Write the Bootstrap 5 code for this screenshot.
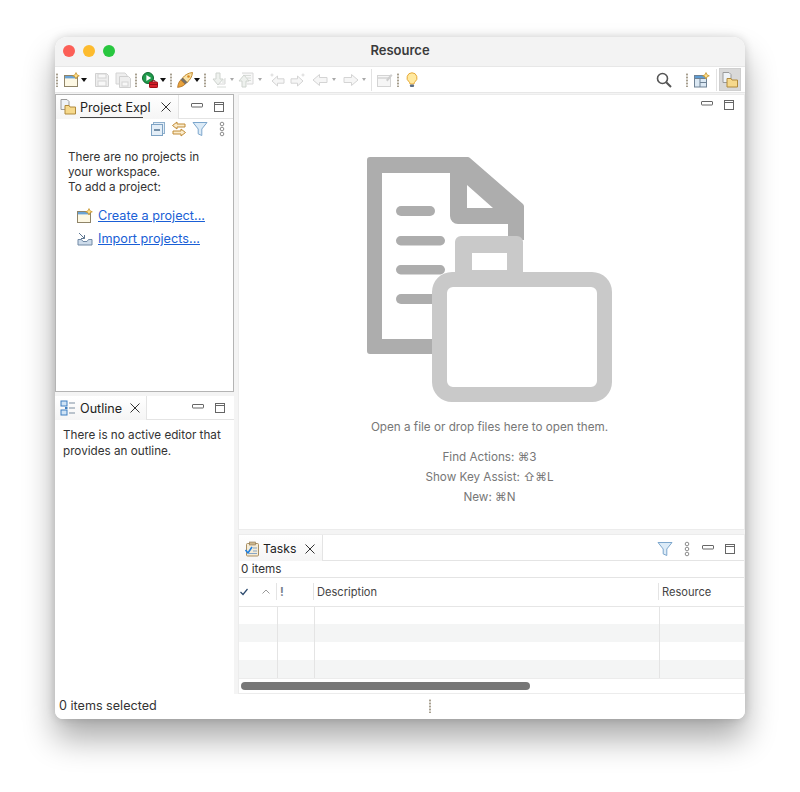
<!DOCTYPE html>
<html lang="en">
<head>
  <meta charset="UTF-8">
  <title>Resource</title>
  <link href="https://cdn.jsdelivr.net/npm/bootstrap@5.3.0/dist/css/bootstrap.min.css" rel="stylesheet">
  <script src="https://cdn.jsdelivr.net/npm/bootstrap@5.3.0/dist/js/bootstrap.bundle.min.js"></script>
  <style>
    html, body { height: 100%; background: #fff; overflow: hidden; }
    body { font-family: Inter, "Liberation Sans", sans-serif; font-size: 11.7px; color: #333; line-height: 16px; }
    .stage { padding: 37px 55px 0; }
    .ide-window { height: 682px; background: #fff; border-radius: 12px 12px 8px 8px; box-shadow: 0 20px 32px rgba(0,0,0,.33), 0 0 10px rgba(0,0,0,.16); overflow: hidden; }
    .title-bar { height: 29px; background: #f3f3f3; padding: 0 8px 2px; flex: none; }
    .title-text { font-weight: 600; font-size: 13px; color: #3a3a3a; left: 0; right: 0; text-align: center; margin-top: -2px; }
    .traffic { width: 12px; height: 12px; border-radius: 50%; }
    .tl-red { background: #fc5f57; }
    .tl-yellow { background: #fdbb2e; }
    .tl-green { background: #28c73f; }
    .tool-bar { height: 27px; flex: none; padding: 0 4px 0 1px; border-top: 1px solid #e7e7e7; border-bottom: 1px solid #e7e7e7; }
    .grip { width: 2px; height: 14px; flex: none; background: radial-gradient(circle, #a79f8f 0 1px, transparent 1.2px) 0 0 / 2px 3px repeat-y; }
    .tool-sep { width: 1px; height: 22px; background: #e2e2e2; flex: none; }
    .drop { width: 0; height: 0; flex: none; border: 3px solid transparent; border-top: 4px solid #111; border-bottom: 0; }
    .drop-off { border-width: 3px 2.5px 0; border-top-color: #a9a9a9; }
    .sp1 { margin-left: 1px; } .sp2 { margin-left: 2px; } .sp3 { margin-left: 3px; } .sp4 { margin-left: 4px; }
    .sp5 { margin-left: 5px; } .sp6 { margin-left: 6px; } .sp7 { margin-left: 7px; }
    .sp-search { margin-left: 14px; }
    .sp-menu { margin-left: 11px; }
    .persp-btn { width: 22px; height: 23px; background: #d9d9d9; border: 1px solid #cfcfcf; flex: none; margin-left: 2px; }
    .work-area { min-height: 0; background: #f4f4f4; }
    .left-col { width: 179px; flex: none; }
    .right-col { min-width: 0; margin-left: 4px; }
    .sash-h { height: 4px; flex: none; }
    .pane { background: #fff; min-height: 0; }
    .pane-active { border: 1px solid #b4b4b4; height: 298px; margin-top: 1px; flex: none; }
    .pane-plain { border: 1px solid #ececec; }
    .tab-row { height: 24px; flex: none; }
    .tab-item { height: 24px; padding-left: 4px; flex: none; background: linear-gradient(#fff, #f5f5f5); color: #222; }
    .tab-line { border-bottom: 1px solid #e4e4e4; }
    .tab-right { border-right: 1px solid #e4e4e4; }
    .tab-label { font-size: 12.2px; }
    .tab-wide { font-size: 12.6px; }
    .tab-under { height: 20px; line-height: 19px; margin-top: 1px; white-space: nowrap; width: 71px; background: linear-gradient(#444, #444) 0 100% / 63px 1px no-repeat; }
    .project-tab { width: 123px; }
    .outline-tab { width: 92px; padding-left: 5px; }
    .outline-label { margin-top: 1px; }
    .tasks-tab { width: 84px; padding-left: 5px; padding-top: 2px; height: 26px; }
    .tasks-row { height: 26px; }
    .tasks-right { padding-top: 2px; }
    .ctl-group { gap: 10px; padding-right: 8px; }
    .menu-shift { margin-right: 2px; }
    .close-project { margin-right: 6px; }
    .close-outline { margin-right: 5px; }
    .close-tasks { margin-right: 6px; }
    .view-bar { height: 20px; padding-right: 8px; flex: none; }
    .project-body { padding: 11px 12px 0; line-height: 15px; }
    .link-first { margin: 13px 0 0 9px; }
    .link-next { margin: 7px 0 0 9px; }
    .ide-link { color: #1a5fd6; font-size: 12.7px; line-height: 16px; margin-left: 1px; }
    .outline-body { padding: 7px 8px; }
    .editor-pane { height: 436px; margin-top: 1px; flex: none; }
    .min-max { top: 4px; right: 9px; gap: 10px; }
    .hero { padding-top: 62px; color: #777; margin-left: -4px; }
    .hero-open { margin-top: 16px; }
    .hero-keys { margin-top: 12px; line-height: 20px; }
    .tasks-pane { min-height: 0; }
    .items-row { height: 17px; flex: none; padding-left: 2px; border-bottom: 1px solid #e4e4e4; }
    .table-wrap { overflow: hidden; height: 100px; flex: none; }
    .task-table { table-layout: fixed; width: 505px; }
    .task-table th { font-weight: 400; font-size: 11.1px; color: #444; height: 28px; padding: 0 0 0 3px; border-bottom: 1px solid #e6e6e6; vertical-align: middle; }
    .task-table th.col-check { padding-left: 1px; }
    .task-table td { height: 18px; padding: 0; border: 0; border-right: 1px solid #e4e4e4; }
    .task-table td:last-child { border-right: 0; }
    .task-table tr:nth-child(even) td { background: #f4f5f5; }
    .col-check { width: 38px; }
    .col-prio { width: 37px; }
    .col-desc { width: 345px; }
    .head-rule { border-right: 1px solid #e4e4e4; height: 17px; line-height: 19px; }
    .prio-mark { color: #75808c; font-weight: 700; }
    .sort-caret { margin-left: 14px; }
    .scroll-track { height: 15px; flex: none; padding: 3px 0 0 2px; border-top: 1px solid #ececec; }
    .scroll-thumb { width: 289px; height: 8px; border-radius: 4px; background: #777; }
    .status-row { height: 25px; flex: none; padding: 0 0 2px 4px; background: #fff; color: #333; font-size: 12.6px; }
    .status-grip { margin-left: 272px; }
  </style>
</head>
<body>
  <svg class="d-none">
    <symbol id="i-new" viewBox="0 0 16 16">
      <rect x=".5" y="3.5" width="13" height="11" fill="#fdf8e4" stroke="#8f8468"/>
      <rect x="1" y="4" width="12" height="2.4" fill="#6aa3d5"/>
      <path d="M12 .6l1 2.2 2.3 1-2.3 1-1 2.2-1-2.2-2.3-1 2.3-1z" fill="#ffe08a" stroke="#c8962e" stroke-width=".8"/>
    </symbol>
    <symbol id="i-filter" viewBox="0 0 16 16">
      <path d="M1 1.500h14L9.800 8v6.500l-3.600-1.600V8z" fill="#dcebf7" stroke="#7ca6cc"/>
    </symbol>
    <symbol id="i-menu" viewBox="0 0 6 16">
      <circle cx="3" cy="3" r="1.800" fill="none" stroke="#8c8c8c"/>
      <circle cx="3" cy="8" r="1.800" fill="none" stroke="#8c8c8c"/>
      <circle cx="3" cy="13" r="1.800" fill="none" stroke="#8c8c8c"/>
    </symbol>
    <symbol id="i-min" viewBox="0 0 12 12">
      <rect x=".5" y="2.500" width="11" height="3.500" rx=".5" fill="#fff" stroke="#666"/>
    </symbol>
    <symbol id="i-max" viewBox="0 0 12 12">
      <rect x="1.500" y="1.500" width="9" height="9" fill="#fff" stroke="#666"/>
      <path d="M1.500 3.500h9" stroke="#666"/>
    </symbol>
    <symbol id="i-close" viewBox="0 0 12 12">
      <path d="M1.500 1.500l9 9M10.500 1.500l-9 9" stroke="#333" fill="none"/>
    </symbol>
    <symbol id="i-project" viewBox="0 0 16 16">
      <path d="M1 .5h6l2 2v8H1z" fill="#eef2f6" stroke="#9a9a9a"/>
      <path d="M5 6.500h4l1 1.500h5.500v7H5z" fill="#f6d98c" stroke="#b08a3c"/>
    </symbol>
    <symbol id="i-save" viewBox="0 0 16 16">
      <path d="M1.500 1.500h11l2 2v11h-13z" fill="#eee" stroke="#d0d0d0"/>
      <rect x="4" y="2" width="8" height="4" fill="#f8f8f8" stroke="#d4d4d4"/>
      <rect x="4" y="9" width="8" height="5" fill="#f8f8f8" stroke="#d4d4d4"/>
    </symbol>
    <symbol id="i-back" viewBox="0 0 16 16">
      <path d="M7.500 2.500L1 8l6.500 5.500V10.500H15v-5H7.500z" fill="#f6f6f6" stroke="#d4d4d4" stroke-linejoin="round"/>
    </symbol>
    <symbol id="i-fwd" viewBox="0 0 16 16">
      <path d="M8.500 2.500L15 8l-6.500 5.500V10.500H1v-5h7.500z" fill="#f6f6f6" stroke="#d4d4d4" stroke-linejoin="round"/>
    </symbol>
  </svg>

  <div class="stage">
    <div class="ide-window d-flex flex-column">
      <div class="title-bar d-flex align-items-center gap-2 position-relative">
        <span class="traffic tl-red"></span>
        <span class="traffic tl-yellow"></span>
        <span class="traffic tl-green"></span>
        <span class="title-text position-absolute">Resource</span>
      </div>

      <div class="tool-bar d-flex align-items-center">
        <span class="grip"></span>
        <svg class="sp6" width="16" height="16"><use href="#i-new"/></svg>
        <span class="drop sp1"></span>
        <svg class="sp7" width="16" height="16"><use href="#i-save"/></svg>
        <svg class="sp5" width="16" height="16" viewBox="0 0 16 16">
          <path d="M1 1h9l2 2v9H1z" fill="#eee" stroke="#d4d4d4"/>
          <path d="M4.500 4.500h9l2 2v9h-11z" fill="#eee" stroke="#d0d0d0"/>
          <rect x="7" y="10" width="6" height="4" fill="#f8f8f8" stroke="#d4d4d4"/>
        </svg>
        <span class="grip sp4"></span>
        <svg class="sp5" width="16" height="16" viewBox="0 0 16 16">
          <circle cx="6" cy="6" r="5.500" fill="#1f9a4b" stroke="#0f6a30"/>
          <path d="M4.400 3v6l4.800-3z" fill="#fff"/>
          <rect x="7.500" y="10" width="8" height="5.500" rx=".6" fill="#d9202c" stroke="#a01018"/>
          <path d="M10 10V8.600h3V10M7.500 12.400h8" stroke="#7c0d14" fill="none" stroke-width=".8"/>
        </svg>
        <span class="drop sp2"></span>
        <span class="grip sp4"></span>
        <svg class="sp5" width="16" height="16" viewBox="0 0 16 16">
          <path d="M15.500.5C11 1 8 3 5.500 6l4.500 4.500c3-2.500 5-5.500 5.500-10z" fill="#f8e2a8" stroke="#c48a2c"/>
          <path d="M5.500 6L3.800 8l4.200 4.200 2-1.700z" fill="#77726a" stroke="#5a554d" stroke-width=".6"/>
          <path d="M3.800 8C2 9.500 1 12 .6 15.400 4 15 6.500 14 8 12.200z" fill="#e8a23c" stroke="#a96a1e" stroke-width=".7"/>
          <circle cx="11.500" cy="4.500" r="1.300" fill="#d98a20"/>
        </svg>
        <span class="drop sp1"></span>
        <span class="grip sp4"></span>
        <svg class="sp5" width="16" height="16" viewBox="0 0 16 16">
          <path d="M5 1h4v6h3l-5 6-5-6h3z" fill="#eef1ee" stroke="#cfd4cf"/>
          <path d="M8 12h6V6" fill="none" stroke="#d8d8d8"/>
          <path d="M6 15h9M11 8h3M11 10h3" stroke="#d8dcd8"/>
        </svg>
        <span class="drop drop-off sp3"></span>
        <svg class="sp4" width="16" height="16" viewBox="0 0 16 16">
          <path d="M4 1h11v11H9" fill="#f7f7f7" stroke="#d8d8d8"/>
          <path d="M7 3.500h6M9 6h4M10 8.500h3" stroke="#d8dcd8"/>
          <path d="M6 3l5 6H8v6H4V9H1z" fill="#eef1ee" stroke="#cfd4cf"/>
        </svg>
        <span class="drop drop-off sp4"></span>
        <svg class="sp7" width="16" height="16" viewBox="0 0 16 16">
          <path d="M8.500 4L3 9l5.500 5v-2.800h6.500V6.800H8.500z" fill="#f6f6f6" stroke="#d4d4d4" stroke-linejoin="round"/>
          <path d="M3 .8l.7 1.700 1.800.5-1.800.6L3 5.300l-.7-1.700L.5 3l1.800-.5z" fill="#dcdcdc"/>
        </svg>
        <svg class="sp5" width="16" height="16" viewBox="0 0 16 16">
          <path d="M7.500 4L13 9l-5.500 5v-2.800H1V6.800h6.500z" fill="#f6f6f6" stroke="#d4d4d4" stroke-linejoin="round"/>
          <path d="M13 .8l.7 1.700 1.800.5-1.800.6-.7 1.700-.7-1.700-1.800-.6 1.800-.5z" fill="#dcdcdc"/>
        </svg>
        <svg class="sp6" width="16" height="16"><use href="#i-back"/></svg>
        <span class="drop drop-off sp4"></span>
        <svg class="sp7" width="16" height="16"><use href="#i-fwd"/></svg>
        <span class="drop drop-off sp3"></span>
        <span class="tool-sep sp5"></span>
        <svg class="sp5" width="16" height="16" viewBox="0 0 16 16">
          <rect x=".5" y="3.500" width="13" height="11" fill="#f6f6f6" stroke="#d4d4d4"/>
          <path d="M1 6h12" stroke="#ddd" stroke-width="2"/>
          <path d="M9 8l5-6 1.500 1.500-5 6z" fill="#cfcfcf"/>
        </svg>
        <span class="grip sp4"></span>
        <svg class="sp5" width="16" height="16" viewBox="0 0 16 16">
          <path d="M8 .8a5 5 0 0 0-3 9c.7.6 1 1.300 1 2.200h4c0-.9.3-1.600 1-2.200a5 5 0 0 0-3-9z" fill="#ffe9a0" stroke="#e6a93a"/>
          <rect x="6" y="12.500" width="4" height="2.500" rx=".8" fill="#5d6f86"/>
        </svg>
        <svg class="ms-auto" width="16" height="16" viewBox="0 0 16 16">
          <circle cx="6.500" cy="6.500" r="5" fill="none" stroke="#555" stroke-width="1.600"/>
          <path d="M10.200 10.200L15 15" stroke="#555" stroke-width="2"/>
        </svg>
        <span class="grip sp-search"></span>
        <svg class="sp6" width="16" height="16" viewBox="0 0 16 16">
          <rect x=".5" y="3.500" width="12" height="11.500" fill="#dbe8f3" stroke="#6f8295"/>
          <path d="M1 6.500h11M6 4v11M6 10.500h6" stroke="#6f8295" fill="none"/>
          <rect x="1" y="4" width="11" height="2" fill="#5d9bd2"/>
          <path d="M12 .6l1 2.200 2.300 1-2.300 1-1 2.200-1-2.200-2.300-1 2.300-1z" fill="#ffe08a" stroke="#c8962e" stroke-width=".8"/>
        </svg>
        <span class="tool-sep sp6"></span>
        <span class="persp-btn d-flex align-items-center justify-content-center">
          <svg width="16" height="16"><use href="#i-project"/></svg>
        </span>
      </div>

      <div class="work-area d-flex flex-grow-1">
        <div class="left-col d-flex flex-column">
          <section class="pane pane-active d-flex flex-column">
            <div class="tab-row d-flex">
              <div class="tab-item project-tab tab-right d-flex align-items-center">
                <svg width="16" height="16"><use href="#i-project"/></svg>
                <span class="tab-wide tab-under ms-1">Project Expl</span>
                <svg class="ms-auto close-project" width="12" height="12"><use href="#i-close"/></svg>
              </div>
              <div class="tab-line ctl-group flex-grow-1 d-flex align-items-center justify-content-end">
                <svg width="12" height="12"><use href="#i-min"/></svg>
                <svg width="12" height="12"><use href="#i-max"/></svg>
              </div>
            </div>
            <div class="view-bar d-flex align-items-center justify-content-end">
              <svg width="16" height="16" viewBox="0 0 16 16">
                <rect x="3.500" y="1.500" width="11" height="11" fill="#e4eef7" stroke="#8fb0cd"/>
                <rect x="1.500" y="3.500" width="11" height="11" fill="#e4eef7" stroke="#7ea3c4"/>
                <path d="M4 9h6" stroke="#4f6f8c" stroke-width="1.400"/>
              </svg>
              <svg class="sp5" width="16" height="16" viewBox="0 0 16 16">
                <path d="M6 1L1.500 4.500 6 8V6h8V3H6zM10 8l4.500 3.500L10 15v-2H2v-3h8z" fill="#fbeccb" stroke="#c08b36"/>
              </svg>
              <svg class="sp5" width="16" height="16"><use href="#i-filter"/></svg>
              <svg class="sp-menu" width="6" height="16"><use href="#i-menu"/></svg>
            </div>
            <div class="project-body">
              <div>There are no projects in<br>your workspace.<br>To add a project:</div>
              <div class="link-first d-flex align-items-center gap-1">
                <svg width="16" height="16"><use href="#i-new"/></svg>
                <a class="ide-link" href="#">Create a project...</a>
              </div>
              <div class="link-next d-flex align-items-center gap-1">
                <svg width="16" height="16" viewBox="0 0 16 16">
                  <path d="M1 8.500h3.500l1.500 2h4l1.500-2H15V14H1z" fill="#cddbea" stroke="#7089a5"/>
                  <path d="M2 2l5.500 5.500M7.500 4v3.500H4" stroke="#5d7691" fill="none"/>
                </svg>
                <a class="ide-link" href="#">Import projects...</a>
              </div>
            </div>
          </section>
          <div class="sash-h"></div>
          <section class="pane flex-grow-1 d-flex flex-column">
            <div class="tab-row d-flex">
              <div class="tab-item outline-tab tab-right d-flex align-items-center">
                <svg width="16" height="16" viewBox="0 0 16 16">
                  <rect x="1" y="1" width="6" height="5" fill="#cfe3f5" stroke="#3f7fc0"/>
                  <rect x="1" y="10" width="6" height="5" fill="#cfe3f5" stroke="#3f7fc0"/>
                  <path d="M9 3h6M9 8h6M9 13h6" stroke="#7d8ea0"/>
                  <rect x="5" y="7" width="2.500" height="2" fill="#3f7fc0"/>
                </svg>
                <span class="tab-wide outline-label ms-1">Outline</span>
                <svg class="ms-auto close-outline" width="12" height="12"><use href="#i-close"/></svg>
              </div>
              <div class="tab-line ctl-group flex-grow-1 d-flex align-items-center justify-content-end">
                <svg width="12" height="12"><use href="#i-min"/></svg>
                <svg width="12" height="12"><use href="#i-max"/></svg>
              </div>
            </div>
            <div class="outline-body">There is no active editor that provides an outline.</div>
          </section>
        </div>

        <div class="right-col flex-grow-1 d-flex flex-column">
          <section class="pane pane-plain editor-pane position-relative">
            <div class="min-max position-absolute d-flex">
              <svg width="12" height="12"><use href="#i-min"/></svg>
              <svg width="12" height="12"><use href="#i-max"/></svg>
            </div>
            <div class="hero d-flex flex-column align-items-center text-center">
              <svg width="245" height="246" viewBox="367 157 245 246">
                <path fill-rule="evenodd" fill="#adadad" d="M370 157h97a4 4 0 0 1 3 1l53 46a4 4 0 0 1 1 3v33h-16v-16h-50a8 8 0 0 1-8-8v-43h-68v166h60v15h-72a3 3 0 0 1-3-3V160a3 3 0 0 1 3-3zM467 185v23h26z"/>
                <rect x="396" y="206" width="39" height="10" rx="5" fill="#adadad"/>
                <rect x="396" y="236" width="49" height="9.500" rx="4.700" fill="#adadad"/>
                <rect x="396" y="265" width="49" height="9.500" rx="4.700" fill="#adadad"/>
                <rect x="396" y="294" width="45" height="10" rx="5" fill="#adadad"/>
                <path fill-rule="evenodd" fill="#c9c9c9" d="M461 236h56a6 6 0 0 1 6 6v30h69a20 20 0 0 1 20 20v90a20 20 0 0 1-20 20H452a20 20 0 0 1-20-20v-90a20 20 0 0 1 20-20h3v-30a6 6 0 0 1 6-6zM472 253v17h35v-17zM453 287a6 6 0 0 0-6 6v88a6 6 0 0 0 6 6h138a6 6 0 0 0 6-6v-88a6 6 0 0 0-6-6z"/>
              </svg>
              <div class="hero-open">Open a file or drop files here to open them.</div>
              <div class="hero-keys">Find Actions: ⌘3<br>Show Key Assist: ⇧⌘L<br>New: ⌘N</div>
            </div>
          </section>
          <div class="sash-h"></div>
          <section class="pane pane-plain tasks-pane flex-grow-1 d-flex flex-column">
            <div class="tab-row tasks-row d-flex">
              <div class="tab-item tasks-tab tab-right d-flex align-items-center">
                <svg width="16" height="16" viewBox="0 0 16 16">
                  <rect x="2.500" y="2.500" width="12" height="12.500" rx="1" fill="#f5ecd7" stroke="#a98f63"/>
                  <rect x="5.500" y="1" width="6" height="3" fill="#cbb68d" stroke="#8e7750" stroke-width=".6"/>
                  <path d="M9 7h4M9 10h4M5 12.500h8" stroke="#87a6c6"/>
                  <path d="M1.500 9l2.500 3 4-6" fill="none" stroke="#1e7fe0" stroke-width="1.600"/>
                </svg>
                <span class="tab-label sp3">Tasks</span>
                <svg class="ms-auto close-tasks" width="12" height="12"><use href="#i-close"/></svg>
              </div>
              <div class="tab-line tasks-right ctl-group flex-grow-1 d-flex align-items-center justify-content-end">
                <svg width="16" height="16"><use href="#i-filter"/></svg>
                <svg class="sp1 menu-shift" width="6" height="16"><use href="#i-menu"/></svg>
                <svg width="12" height="12"><use href="#i-min"/></svg>
                <svg width="12" height="12"><use href="#i-max"/></svg>
              </div>
            </div>
            <div class="items-row d-flex align-items-center">0 items</div>
            <div class="table-wrap">
              <table class="table task-table mb-0">
                <thead>
                  <tr>
                    <th class="col-check">
                      <div class="head-rule d-flex align-items-center">
                        <svg width="8" height="8" viewBox="0 0 8 8"><path d="M.5 4l2.500 2.500L7.500 1" fill="none" stroke="#2c4a6e" stroke-width="1.200"/></svg>
                        <svg class="sort-caret" width="8" height="8" viewBox="0 0 8 8"><path d="M.5 5.500L4 2l3.500 3.500" fill="none" stroke="#999"/></svg>
                      </div>
                    </th>
                    <th class="col-prio"><div class="head-rule prio-mark">!</div></th>
                    <th class="col-desc"><div class="head-rule">Description</div></th>
                    <th>Resource</th>
                  </tr>
                </thead>
                <tbody>
                  <tr><td></td><td></td><td></td><td></td></tr>
                  <tr><td></td><td></td><td></td><td></td></tr>
                  <tr><td></td><td></td><td></td><td></td></tr>
                  <tr><td></td><td></td><td></td><td></td></tr>
                </tbody>
              </table>
            </div>
            <div class="scroll-track"><div class="scroll-thumb"></div></div>
          </section>
        </div>
      </div>

      <div class="status-row d-flex align-items-center">
        <span>0 items selected</span>
        <span class="grip status-grip"></span>
      </div>
    </div>
  </div>
</body>
</html>
